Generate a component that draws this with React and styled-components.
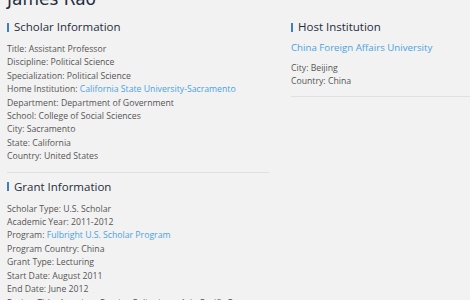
import React from 'react'
import styled, { createGlobalStyle } from 'styled-components'

const GlobalStyle = createGlobalStyle`
  html, body {
    margin: 0;
    padding: 0;
    background: #f2f2f2;
    overflow: hidden;
  }
  body {
    font-family: "Open Sans", "Liberation Sans", sans-serif;
  }
`

const Page = styled.div`
  width: 470px;
  height: 300px;
  overflow: hidden;
  padding: 0 0 0 7px;
  box-sizing: border-box;
`

const Name = styled.h1`
  margin: -11px 0 0 0;
  font-family: "DejaVu Sans", "Open Sans", sans-serif;
  font-size: 17px;
  line-height: 20px;
  font-weight: 400;
  color: #1f2d3d;
`

const Columns = styled.div`
  display: grid;
  grid-template-columns: 262px 1fr;
  column-gap: 22px;
  margin-top: 10px;
`

const Column = styled.div`
  display: flex;
  flex-direction: column;
`

const SectionTitle = styled.h2`
  display: flex;
  align-items: center;
  gap: 5px;
  margin: 0 0 8px 0;
  font-size: 11.5px;
  line-height: 16px;
  font-weight: 500;
  color: #1f2d3d;
  &::before {
    content: '';
    width: 2px;
    height: 9px;
    background: #3d7fc6;
  }
`

const Field = styled.div`
  font-size: 8.7px;
  line-height: 13.4px;
  color: #555;
`

const Link = styled.a`
  color: #4aa3df;
  text-decoration: none;
`

const HostName = styled(Link)`
  display: block;
  font-size: 9.7px;
  line-height: 14px;
  margin: -2px 0 7px 0;
`

const Divider = styled.hr`
  border: 0;
  border-top: 1px solid #e0e0e0;
  margin: ${p => p.$top}px 0 ${p => p.$bottom}px 0;
  width: 100%;
`

const scholar = [
  ['Title', 'Assistant Professor'],
  ['Discipline', 'Political Science'],
  ['Specialization', 'Political Science'],
  ['Home Institution', 'California State University-Sacramento', true],
  ['Department', 'Department of Government'],
  ['School', 'College of Social Sciences'],
  ['City', 'Sacramento'],
  ['State', 'California'],
  ['Country', 'United States'],
]

const grant = [
  ['Scholar Type', 'U.S. Scholar'],
  ['Academic Year', '2011-2012'],
  ['Program', 'Fulbright U.S. Scholar Program', true],
  ['Program Country', 'China'],
  ['Grant Type', 'Lecturing'],
  ['Start Date', 'August 2011'],
  ['End Date', 'June 2012'],
  ['Project Title', 'American Foreign Policy in an Asia-Pacific Era'],
]

function Fields({ rows }) {
  return rows.map(([label, value, link]) => (
    <Field key={label}>
      {label}: {link ? <Link href="#">{value}</Link> : value}
    </Field>
  ))
}

export default function App() {
  return (
    <>
      <GlobalStyle />
      <Page>
        <Name>James Rao</Name>
        <Columns>
          <Column>
            <SectionTitle>Scholar Information</SectionTitle>
            <Fields rows={scholar} />
            <Divider $top={8} $bottom={6} />
            <SectionTitle>Grant Information</SectionTitle>
            <Fields rows={grant} />
          </Column>
          <Column>
            <SectionTitle>Host Institution</SectionTitle>
            <HostName href="#">China Foreign Affairs University</HostName>
            <Fields rows={[['City', 'Beijing'], ['Country', 'China']]} />
            <Divider $top={7} $bottom={0} />
          </Column>
        </Columns>
      </Page>
    </>
  )
}
